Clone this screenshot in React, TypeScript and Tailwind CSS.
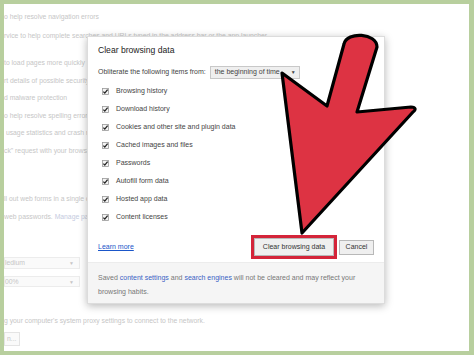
import React from 'react';

const bgLines: { text: string; mt: string }[] = [
  { text: 'o help resolve navigation errors', mt: 'mt-[8px]' },
  { text: 'rvice to help complete searches and URLs typed in the address bar or the app launcher', mt: 'mt-[9px]' },
  { text: 'to load pages more quickly', mt: 'mt-[17px]' },
  { text: 'rt details of possible security incidents to Google', mt: 'mt-[8px]' },
  { text: 'd malware protection', mt: 'mt-[7px]' },
  { text: 'o help resolve spelling errors', mt: 'mt-[8px]' },
  { text: ' usage statistics and crash reports to Google', mt: 'mt-[7px]' },
  { text: 'ck" request with your browsing traffic', mt: 'mt-[8px]' },
];

const items = [
  'Browsing history',
  'Download history',
  'Cookies and other site and plugin data',
  'Cached images and files',
  'Passwords',
  'Autofill form data',
  'Hosted app data',
  'Content licenses',
];

const Check: React.FC = () => (
  <svg width="7" height="7" viewBox="0 0 7 7" className="shrink-0">
    <rect x="0.5" y="0.5" width="6" height="6" fill="#f4f4f4" stroke="#9a9a9a" strokeWidth="0.8" />
    <path d="M1.4 3.6 L2.8 5.1 L5.6 1.6" fill="none" stroke="#222" strokeWidth="1.3" />
  </svg>
);

const BgSelect: React.FC<{ label: string; h: string; mt: string }> = ({ label, h, mt }) => (
  <div className={`${mt} ${h} w-[76px] border border-[#ececec] bg-[#fafafa] flex items-center justify-between pr-[5px]`}>
    <span>{label}</span>
    <span className="text-[5px]">▼</span>
  </div>
);

export default function App() {
  return (
    <div
      className="relative w-[474px] h-[355px] bg-[#b8cf9e] pt-[4px] pl-[4px] pr-[5px] pb-[4px] overflow-hidden"
      style={{ fontFamily: '"Liberation Sans", Arial, sans-serif' }}
    >
      <div className="w-full h-full bg-white text-[6.8px] leading-[10px] text-[#c6c6c6] flex flex-col">
        {bgLines.map((l, i) => (
          <div key={i} className={`${l.mt} h-[10px] whitespace-pre`}>
            {l.text}
          </div>
        ))}
        <div className="mt-[38px] h-[10px]">ll out web forms in a single click</div>
        <div className="mt-[8px] h-[10px]">
          web passwords. <span className="text-[#c5cbe0]">Manage passwords</span>
        </div>
        <BgSelect label="ledium" h="h-[12px]" mt="mt-[35px]" />
        <BgSelect label="00%" h="h-[11px]" mt="mt-[7px]" />
        <div className="mt-[29px] h-[10px] whitespace-nowrap">
          g your computer's system proxy settings to connect to the network.
        </div>
        <div className="mt-[6px] h-[14px] w-[16px] border border-[#e4e4e4] bg-[#fafafa] flex items-center pl-[2px]">
          n...
        </div>
      </div>

      {/* dialog */}
      <div className="absolute left-[87px] top-[36px] w-[298px] h-[268px] bg-white shadow-[0_2px_8px_rgba(0,0,0,0.28)] border border-[#dcdcdc] flex flex-col text-[#444] text-[7px]">
        <div className="pl-[10px] pt-[7px] h-[19px] text-[8.6px] leading-[12px] text-[#222]">
          Clear browsing data
        </div>
        <div className="mt-[10px] pl-[10px] h-[13px] flex items-center gap-[4px]">
          <span className="whitespace-nowrap">Obliterate the following items from:</span>
          <div className="h-[13px] w-[90px] border border-[#c8c8c8] bg-[#efefef] flex items-center justify-between pl-[4px] pr-[3px]">
            <span className="whitespace-nowrap">the beginning of time</span>
            <span className="text-[5px]">▼</span>
          </div>
        </div>
        <div className="mt-[3px] flex flex-col">
          {items.map((it) => (
            <div key={it} className="h-[18px] pl-[14px] flex items-center gap-[7px]">
              <Check />
              <span className="whitespace-nowrap">{it}</span>
            </div>
          ))}
        </div>
        <div className="mt-[9px] h-[24px] pl-[10px] pr-[10px] flex items-center justify-between">
          <span className="text-[#1a56c9] underline">Learn more</span>
          <div className="flex items-center gap-[2px]">
            <div className="border-[3px] border-[#d42439]">
              <div className="h-[18px] w-[80px] border border-[#b8b8b8] bg-[#efefef] flex items-center justify-center text-[#333] whitespace-nowrap">
                Clear browsing data
              </div>
            </div>
            <div className="h-[15px] w-[35px] border border-[#b8b8b8] bg-[#efefef] flex items-center justify-center text-[#333]">
              Cancel
            </div>
          </div>
        </div>
        <div className="mt-[3px] flex-1 bg-[#f5f5f5] border-t border-[#ececec] pl-[10px] pt-[8px] leading-[14px] text-[#777] flex flex-col">
          <div className="whitespace-nowrap">
            Saved <span className="text-[#3a62c4]">content settings</span> and{' '}
            <span className="text-[#3a62c4]">search engines</span> will not be cleared and may reflect your
          </div>
          <div>browsing habits.</div>
        </div>
      </div>

      {/* big red arrow */}
      <svg className="absolute left-0 top-0" width="474" height="355" viewBox="0 0 474 355">
        <path
          d="M282 73 L327 106 L344 44 C347 31 377 33 377 47 L357 112 L411 107 C416 107 416 110 413 112 L302 233 Z"
          fill="#dd3343"
          stroke="#000"
          strokeWidth="3.2"
          strokeLinejoin="round"
        />
      </svg>
    </div>
  );
}
